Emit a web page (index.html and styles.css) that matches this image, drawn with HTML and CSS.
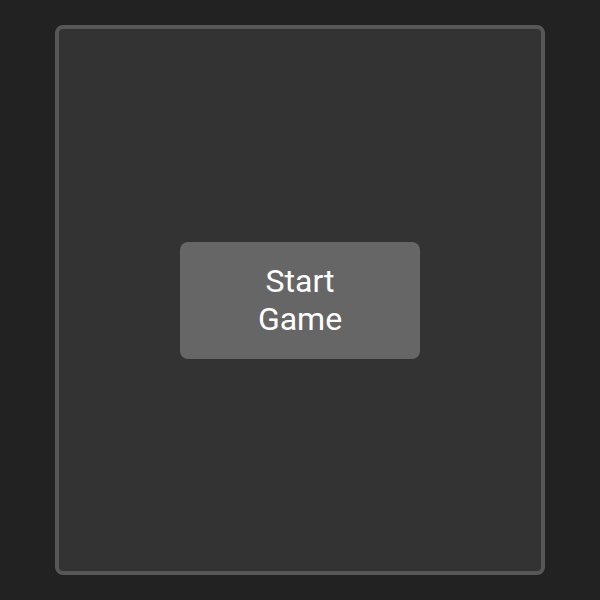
FILE: index.html
```html
<!DOCTYPE html>
<html>
<head>
<meta charset="utf-8">
<link rel="stylesheet" href="styles.css">
</head>
<body>
<div class="page">
  <div class="frame">
    <button class="start">Start Game</button>
  </div>
</div>
</body>
</html>
```

FILE: styles.css
```css
html, body {
  margin: 0;
  padding: 0;
  background: #222222;
}
.page {
  width: 600px;
  height: 600px;
  box-sizing: border-box;
  padding: 25px 55px;
  display: flex;
}
.frame {
  flex: 1;
  box-sizing: border-box;
  border: 4px solid #575757;
  border-radius: 8px;
  background: #333333;
  display: flex;
  align-items: center;
  justify-content: center;
}
.start {
  width: 240px;
  height: 117px;
  box-sizing: border-box;
  padding: 0 50px;
  border: none;
  border-radius: 8px;
  background: #666666;
  color: #ffffff;
  font-family: Roboto, "Liberation Sans", sans-serif;
  font-size: 32px;
  line-height: 38px;
  text-align: center;
  margin-top: 0;
}
```
